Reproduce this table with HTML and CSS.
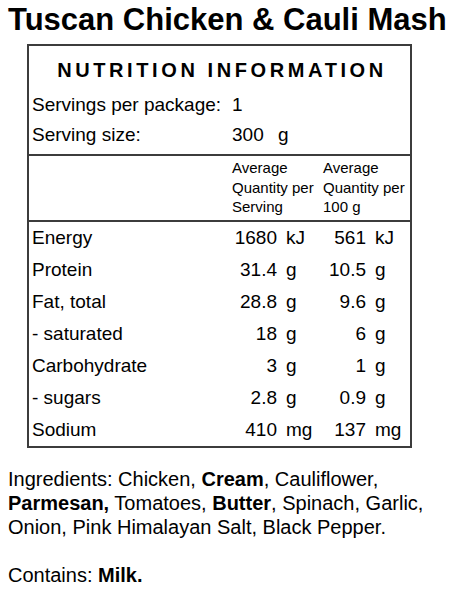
FILE: index.html
```html
<!DOCTYPE html>
<html lang="en">
<head>
    <meta charset="UTF-8">
    <meta name="viewport" content="width=device-width, initial-scale=1.0">
    <title>Tuscan Chicken &amp; Cauli Mash</title>
    <link rel="stylesheet" href="styles.css">
</head>
<body>
    <h1 class="title">Tuscan Chicken &amp; Cauli Mash</h1>

    <!-- nutrition panel -->
    <div class="panel">
        <h2 class="panel-heading">NUTRITION INFORMATION</h2>

        <div class="serving">
            <div class="row serving-row">
                <span>Servings per package:</span>
                <span class="qty-left">1</span>
            </div>
            <div class="row serving-row">
                <span>Serving size:</span>
                <span class="qty-left">300</span>
                <span class="unit unit-tight">g</span>
            </div>
        </div>

        <div class="row col-heads">
            <span></span>
            <span class="col-head">Average<br>Quantity per<br>Serving</span>
            <span class="col-head">Average<br>Quantity per<br>100 g</span>
        </div>

        <div class="nutrients">
            <div class="row">
                <span>Energy</span>
                <span class="qty">1680</span><span class="unit">kJ</span>
                <span class="qty">561</span><span class="unit">kJ</span>
            </div>
            <div class="row">
                <span>Protein</span>
                <span class="qty">31.4</span><span class="unit">g</span>
                <span class="qty">10.5</span><span class="unit">g</span>
            </div>
            <div class="row">
                <span>Fat, total</span>
                <span class="qty">28.8</span><span class="unit">g</span>
                <span class="qty">9.6</span><span class="unit">g</span>
            </div>
            <div class="row">
                <span>- saturated</span>
                <span class="qty">18</span><span class="unit">g</span>
                <span class="qty">6</span><span class="unit">g</span>
            </div>
            <div class="row">
                <span>Carbohydrate</span>
                <span class="qty">3</span><span class="unit">g</span>
                <span class="qty">1</span><span class="unit">g</span>
            </div>
            <div class="row">
                <span>- sugars</span>
                <span class="qty">2.8</span><span class="unit">g</span>
                <span class="qty">0.9</span><span class="unit">g</span>
            </div>
            <div class="row">
                <span>Sodium</span>
                <span class="qty">410</span><span class="unit">mg</span>
                <span class="qty">137</span><span class="unit">mg</span>
            </div>
        </div>
    </div>

    <!-- ingredients -->
    <p class="ingredients">Ingredients: Chicken, <b>Cream</b>, Cauliflower, <b>Parmesan,</b> Tomatoes, <b>Butter</b>, Spinach, Garlic, Onion, Pink Himalayan Salt, Black Pepper.</p>
    <p class="contains">Contains: <b>Milk.</b></p>
</body>
</html>
```

FILE: styles.css
```css
body {
    font-family: 'Liberation Sans', Arial, Helvetica, sans-serif;
    margin: 0;
    padding: 2px 8px;
    background: white;
    color: #000;
}
.title {
    margin: 0 0 6px;
    font-size: 31px;
    line-height: 36px;
    font-weight: bold;
    white-space: nowrap;
}
.panel {
    width: 385px;
    box-sizing: border-box;
    margin-left: 19px;
    border: 2px solid #3c3c3c;
    padding-left: 3px;
    font-size: 19px;
}
.panel-heading {
    margin: 0;
    padding: 12px 0 8px 2px;
    font-size: 20px;
    line-height: 24px;
    letter-spacing: 3.6px;
    text-align: center;
}
.serving {
    padding-bottom: 4px;
    border-bottom: 2px solid #3c3c3c;
    margin-left: -3px;
    padding-left: 3px;
}
.row {
    display: grid;
    grid-template-columns: 200px 45px 46px 43px 1fr;
    line-height: 32px;
    white-space: nowrap;
}
.serving-row {
    line-height: 30px;
}
.qty {
    text-align: right;
}
.qty-left {
    text-align: left;
}
.unit {
    padding-left: 9px;
}
.unit-tight {
    padding-left: 1px;
}
.col-heads {
    margin-left: -3px;
    padding: 2px 0 3.5px 3px;
    border-bottom: 2px solid #3c3c3c;
    font-size: 15px;
    line-height: 19.5px;
}
.col-head {
    grid-column: span 2;
}
.ingredients {
    margin: 19px 0 24px;
    font-size: 20px;
    line-height: 24px;
}
.contains {
    margin: 0;
    font-size: 20px;
    line-height: 24px;
}
```
